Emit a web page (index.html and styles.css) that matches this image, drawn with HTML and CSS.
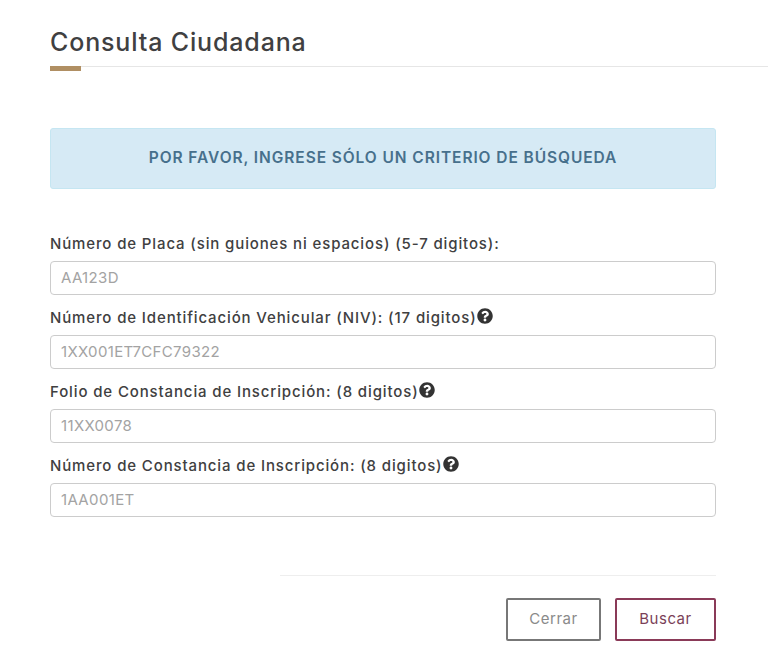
FILE: index.html
```html
<!DOCTYPE html>
<html lang="es">
<head>
<meta charset="UTF-8">
<meta name="viewport" content="width=device-width, initial-scale=1.0">
<title>Consulta Ciudadana</title>
<link rel="stylesheet" href="styles.css">
</head>
<body>

<div class="modal">
  <div class="modal-header">
    <h1 class="modal-title">Consulta Ciudadana</h1>
  </div>

  <div class="alert">POR FAVOR, INGRESE SÓLO UN CRITERIO DE BÚSQUEDA</div>

  <form class="search-form" onsubmit="return false;">
    <div class="field">
      <label for="placa">Número de Placa (sin guiones ni espacios) (5-7 digitos):</label>
      <input id="placa" type="text" placeholder="AA123D">
    </div>
    <div class="field">
      <label for="niv">Número de Identificación Vehicular (NIV): (17 digitos)<svg class="help" viewBox="0 0 512 512"><path d="M504 256c0 136.997-111.043 248-248 248S8 392.997 8 256C8 119.083 119.043 8 256 8s248 111.083 248 248zM262.655 90c-54.497 0-89.255 22.957-116.549 63.758-3.536 5.286-2.353 12.415 2.715 16.258l34.699 26.31c5.205 3.947 12.621 3.008 16.665-2.122 17.864-22.658 30.113-35.797 57.303-35.797 20.429 0 45.698 13.148 45.698 32.958 0 14.976-12.363 22.667-32.534 33.976C247.128 238.528 216 254.941 216 296v4c0 6.627 5.373 12 12 12h56c6.627 0 12-5.373 12-12v-1.333c0-28.462 83.186-29.647 83.186-106.667 0-58.002-60.165-102-116.531-102zM256 338c-25.365 0-46 20.635-46 46 0 25.364 20.635 46 46 46s46-20.636 46-46c0-25.365-20.635-46-46-46z"/></svg></label>
      <input id="niv" type="text" placeholder="1XX001ET7CFC79322">
    </div>
    <div class="field">
      <label for="folio">Folio de Constancia de Inscripción: (8 digitos)<svg class="help" viewBox="0 0 512 512"><path d="M504 256c0 136.997-111.043 248-248 248S8 392.997 8 256C8 119.083 119.043 8 256 8s248 111.083 248 248zM262.655 90c-54.497 0-89.255 22.957-116.549 63.758-3.536 5.286-2.353 12.415 2.715 16.258l34.699 26.31c5.205 3.947 12.621 3.008 16.665-2.122 17.864-22.658 30.113-35.797 57.303-35.797 20.429 0 45.698 13.148 45.698 32.958 0 14.976-12.363 22.667-32.534 33.976C247.128 238.528 216 254.941 216 296v4c0 6.627 5.373 12 12 12h56c6.627 0 12-5.373 12-12v-1.333c0-28.462 83.186-29.647 83.186-106.667 0-58.002-60.165-102-116.531-102zM256 338c-25.365 0-46 20.635-46 46 0 25.364 20.635 46 46 46s46-20.636 46-46c0-25.365-20.635-46-46-46z"/></svg></label>
      <input id="folio" type="text" placeholder="11XX0078">
    </div>
    <div class="field">
      <label for="numero">Número de Constancia de Inscripción: (8 digitos)<svg class="help" viewBox="0 0 512 512"><path d="M504 256c0 136.997-111.043 248-248 248S8 392.997 8 256C8 119.083 119.043 8 256 8s248 111.083 248 248zM262.655 90c-54.497 0-89.255 22.957-116.549 63.758-3.536 5.286-2.353 12.415 2.715 16.258l34.699 26.31c5.205 3.947 12.621 3.008 16.665-2.122 17.864-22.658 30.113-35.797 57.303-35.797 20.429 0 45.698 13.148 45.698 32.958 0 14.976-12.363 22.667-32.534 33.976C247.128 238.528 216 254.941 216 296v4c0 6.627 5.373 12 12 12h56c6.627 0 12-5.373 12-12v-1.333c0-28.462 83.186-29.647 83.186-106.667 0-58.002-60.165-102-116.531-102zM256 338c-25.365 0-46 20.635-46 46 0 25.364 20.635 46 46 46s46-20.636 46-46c0-25.365-20.635-46-46-46z"/></svg></label>
      <input id="numero" type="text" placeholder="1AA001ET">
    </div>

    <div class="modal-footer">
      <button type="button" class="btn btn-close">Cerrar</button>
      <button type="submit" class="btn btn-search">Buscar</button>
    </div>
  </form>
</div>

</body>
</html>
```

FILE: styles.css
```css
html, body {
  margin: 0;
  padding: 0;
  background-color: #fff;
}

body {
  font-family: 'Inter', 'Open Sans', sans-serif;
  color: #404041;
  overflow: hidden;
}

.modal {
  height: 667px;
  box-sizing: border-box;
  padding-top: 26px;
}

.modal-header {
  margin-left: 50px;
  height: 40px;
  border-bottom: 1px solid #e6e6e6;
  position: relative;
}

.modal-header:after {
  content: "";
  position: absolute;
  left: 0;
  top: 40px;
  width: 31px;
  height: 5px;
  background-color: #b08f63;
}

.modal-title {
  margin: 0;
  padding-top: 1px;
  font-size: 25px;
  line-height: 30px;
  font-weight: 500;
  letter-spacing: 0.85px;
  color: #404041;
}

.alert {
  margin: 61px 52px 0 50px;
  height: 61px;
  box-sizing: border-box;
  border: 1px solid #c5e6f2;
  border-radius: 3px;
  background-color: #d6eaf5;
  color: #47708c;
  font-size: 15.5px;
  font-weight: 600;
  letter-spacing: 0.92px;
  text-align: center;
  line-height: 58px;
}

.search-form {
  margin: 44px 52px 0 50px;
}

.field {
  height: 74px;
}

.field label {
  display: flex;
  align-items: center;
  height: 21px;
  margin-bottom: 7px;
  font-size: 15px;
  font-weight: 500;
  letter-spacing: 0.87px;
  color: #404041;
}

.help {
  width: 16px;
  height: 16px;
  margin-top: -3px;
  fill: #333;
}

.field input {
  display: block;
  width: 100%;
  height: 34px;
  box-sizing: border-box;
  padding: 0 10px 2px;
  border: 1px solid #ccc;
  border-radius: 4px;
  font-family: inherit;
  font-size: 15px;
  letter-spacing: 0.35px;
}

.field input::placeholder {
  color: #a3a3a3;
  opacity: 1;
}

.modal-footer {
  display: flex;
  justify-content: flex-end;
  gap: 14px;
  margin: 46px 0 0 230px;
  padding-top: 22px;
  border-top: 1px solid #eee;
}

.btn {
  height: 43px;
  box-sizing: border-box;
  padding: 0 0 3px;
  background-color: #fff;
  border-radius: 2px;
  border: 2px solid;
  font-family: inherit;
  font-size: 15px;
  letter-spacing: 0.5px;
  cursor: pointer;
}

.btn-close {
  width: 95px;
  border-color: #777;
  color: #8a8a8a;
}

.btn-search {
  width: 101px;
  border-color: #8a3a58;
  color: #7b3f58;
}
```
